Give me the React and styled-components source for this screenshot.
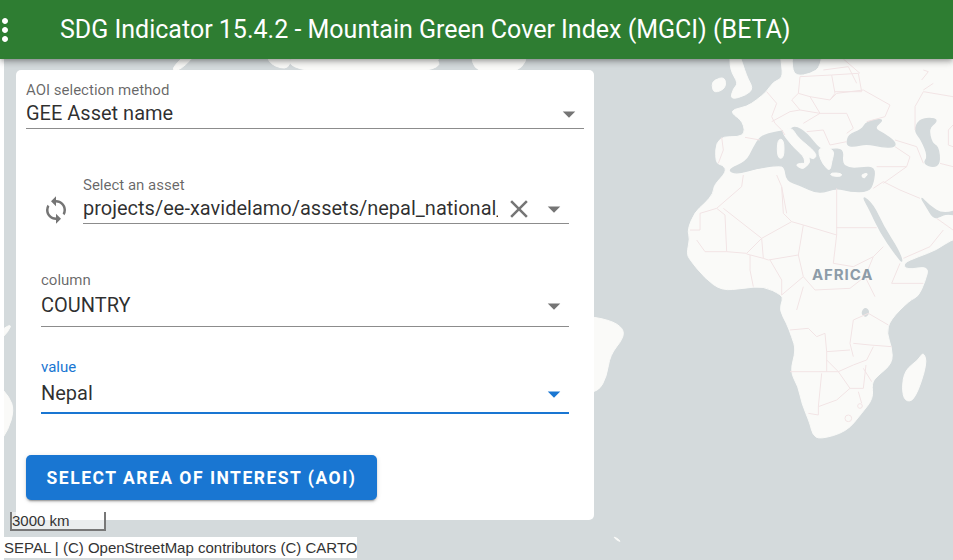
import styled, { createGlobalStyle } from "styled-components";
import { MdArrowDropDown, MdClose, MdMoreVert, MdSync } from "react-icons/md";

const GlobalStyle = createGlobalStyle`
  html, body {
    margin: 0;
    padding: 0;
    background: #fff;
  }
  body {
    font-family: Roboto, "Liberation Sans", sans-serif;
  }
`;

// coordinates below are in 3x units, same as tracing off a 3x crop of the map
const MAIN_LAND =
  "M700,-60 L1300,-60 L1300,500 L1089,565 L1040,600 L985,620 L938,640 L950,660 L1018,648 L1005,695 L985,740 L960,750 L900,810 L890,850 L905,890 L908,940 L860,980 L845,1000 L850,1045 L815,1090 L770,1145 L690,1168 L668,1155 L660,1120 L635,1060 L625,1010 L600,965 L618,900 L605,860 L590,820 L568,780 L578,750 L575,735 L520,708 L460,715 L395,722 L345,685 L300,630 L290,610 L300,565 L292,540 L315,485 L345,460 L370,430 L372,405 L410,365 L400,345 L375,340 L380,258 L465,262 L460,215 L425,190 L430,178 L470,170 L500,150 L530,125 L550,95 L578,85 L575,40 L565,-20 L610,-20 L605,55 L620,78 L660,72 L695,50 Z";

const WATER = [
  // med
  "M412,360 L470,335 L490,295 L512,258 L560,246 L600,240 L615,228 L650,250 L690,300 L715,300 L760,295 L755,340 L775,355 L810,355 L855,350 L850,400 L835,425 L780,425 L740,413 L685,432 L630,405 L590,392 L585,350 L565,345 L500,355 L440,372 Z",
  // black sea
  "M770,285 L775,255 L815,240 L830,215 L885,205 L850,235 L880,250 L915,275 L915,290 L880,292 L830,280 L790,290 Z",
  // caspian
  "M1000,205 L1035,205 L1040,215 L1015,235 L1025,280 L1045,290 L1050,340 L1030,352 L1000,340 L1015,320 L995,270 L975,245 L980,220 Z",
  // red sea
  "M815,435 L850,465 L880,530 L925,600 L940,642 L915,610 L870,545 L840,480 Z",
  // gulf
  "M990,438 L1015,465 L1060,495 L1130,470 L1130,500 L1070,490 L1050,500 L1030,505 L1010,470 Z",
  // lake victoria
  "M825,772 L838,785 L828,802 L814,790 Z",
];

const ISLANDS = [
  "M420,0 L445,0 L470,80 L490,115 L470,135 L420,150 L430,115 L445,100 L420,60 Z",
  "M372,90 L405,80 L408,115 L372,130 L365,105 Z",
  // madagascar
  "M1000,905 L1012,940 L975,1050 L945,1055 L935,1015 L945,960 L985,930 Z",
  // brazil
  "M-30,795 L60,810 L100,835 L100,865 L60,915 L50,980 L25,1025 L-30,1030 Z",
  // falklands
  "M70,1460 L82,1465 L93,1476 L80,1470 Z",
];

// drawn after the water, these sit inside the med
const MED_LAND = [
  // italy
  "M570,240 L606,232 L622,262 L682,310 L672,330 L654,318 L662,338 L638,358 L648,325 L610,292 Z",
  // greece
  "M688,292 L735,298 L725,335 L720,365 L698,342 L686,312 Z",
  // sardinia, corsica
  "M562,268 L582,268 L582,325 L562,325 Z",
  // sicily
  "M612,343 L650,338 L642,360 Z",
  // crete
  "M722,368 L756,370 L754,380 L722,378 Z",
  // cyprus
  "M812,374 L836,368 L822,388 Z",
];

const TOP_LAND = [
  "M-576,0 L-447,0 L-462,54 L-528,66 L-564,62 Z",
  "M-1260,60 L-1200,0 L-1170,0 L-1230,62 Z",
  "M-975,0 L-900,0 L-900,60 L-960,45 Z",
  "M-900,0 L-474,0 L-435,70 L-900,70 Z",
  "M-360,0 L-180,0 L-210,70 L-345,70 Z",
];

const LEFT_LAND = [
  "M-1780,850 L-1735,820 L-1745,845 L-1780,880 Z",
  "M-1780,1000 L-1742,1040 L-1728,1080 L-1745,1140 L-1780,1190 Z",
];

const BORDERS = [
  "M465,262 L510,270",
  "M395,262 L400,300 L385,340",
  "M530,125 L560,160 L545,200 L555,220 L575,240 L585,255",
  "M630,80 L625,130 L605,150 L630,180 L600,185 L545,215",
  "M630,80 L725,75 L735,130 L720,150 L660,140 L625,130",
  "M725,75 L805,70 L815,125 L735,125",
  "M720,150 L740,130 L820,120 L900,165 L885,200 L830,215",
  "M700,60 L775,50 L800,100",
  "M760,27 L810,70",
  "M690,190 L770,190 L790,235 L770,250",
  "M640,220 L690,190 L660,140",
  "M650,245 L700,240 L720,285 L770,275",
  "M630,180 L690,190",
  "M975,170 L1000,125 L1089,140",
  "M975,170 L975,240",
  "M915,270 L980,290 L1000,340",
  "M915,290 L960,320 L950,350 L860,350",
  "M880,400 L950,350",
  "M850,415 L880,395 L930,420 L990,445",
  "M1040,505 L1089,540",
  "M940,625 L1020,590 L1060,540",
  "M1050,340 L1089,350",
  "M1075,240 L1089,225",
  "M1075,240 L1075,285 L1089,290",
  "M300,540 L330,540 L330,490 L380,475 L455,410 L460,375",
  "M400,475 L515,565 L605,515 L580,490 L575,410 L560,375",
  "M380,475 L405,495 L410,605 L345,605 L320,570",
  "M410,605 L470,610 L515,565",
  "M515,565 L520,625 L470,612",
  "M605,515 L640,525 L625,615 L535,630",
  "M480,615 L480,660 L490,710",
  "M540,630 L575,690 L575,735",
  "M520,625 L535,630",
  "M575,735 L640,680 L625,615",
  "M575,410 L590,490",
  "M640,525 L740,555 L740,415",
  "M740,533 L860,533",
  "M740,555 L730,640 L790,650 L850,620 L880,590",
  "M850,620 L825,680 L855,740",
  "M930,640 L905,700 L1000,700",
  "M640,680 L675,720 L780,715 L825,680",
  "M640,710 L620,780",
  "M600,840 L655,835 L680,860 L705,850 L710,905 L780,900",
  "M600,965 L690,965 L745,965",
  "M710,905 L710,965",
  "M710,930 L745,965 L790,945 L830,930 L850,890",
  "M790,810 L835,790 L895,825",
  "M790,810 L780,880 L790,920",
  "M790,880 L840,885 L905,890",
  "M695,970 L685,1070 L740,1050 L780,1015 L745,965",
  "M685,1070 L685,1095 L655,1090",
  "M780,1015 L820,1015 L828,945",
  "M845,995 L820,955",
  "M805,1025 L815,1060",
  "M1000,120 L1030,100",
  "M1000,60 L1015,65 L995,90",
];

// rounds the corners of a traced outline so the coasts don't look cut with scissors
function smooth(d) {
  const nums = d.match(/-?\d+/g).map(Number);
  const pts = [];
  for (let i = 0; i < nums.length; i += 2) pts.push([nums[i], nums[i + 1]]);
  const mid = (a, b) => [(a[0] + b[0]) / 2, (a[1] + b[1]) / 2];
  const start = mid(pts[0], pts[1]);
  let out = `M${start[0]},${start[1]}`;
  for (let i = 1; i <= pts.length; i++) {
    const c = pts[i % pts.length];
    const m = mid(c, pts[(i + 1) % pts.length]);
    out += ` Q${c[0]},${c[1]} ${m[0]},${m[1]}`;
  }
  return out + " Z";
}

const MapLayer = styled.svg`
  position: absolute;
  left: 4px;
  top: 0;
  width: 949px;
  height: 560px;
  background: #d4dadc;
  filter: blur(0.4px);
`;

const Land = styled.path`
  fill: #fafaf8;
  stroke: #fafaf8;
  stroke-width: 3;
  stroke-linejoin: round;
`;

const Water = styled.path`
  fill: #d4dadc;
  stroke: #d4dadc;
  stroke-width: 4;
  stroke-linejoin: round;
`;

const Border = styled.path`
  fill: none;
  stroke: #f2e4e5;
  stroke-width: 3;
  stroke-linejoin: round;
`;

const Ring = styled.circle`
  fill: none;
  stroke: #f2e4e5;
  stroke-width: 3;
`;

const Page = styled.div`
  position: relative;
  width: 953px;
  height: 560px;
  overflow: hidden;
`;

const Header = styled.header`
  position: relative;
  z-index: 2;
  height: 59px;
  display: flex;
  align-items: center;
  background: #2e7d32;
  color: #fff;
  box-shadow: 0 2px 4px -1px rgba(0, 0, 0, 0.2), 0 4px 5px 0 rgba(0, 0, 0, 0.14),
    0 1px 10px 0 rgba(0, 0, 0, 0.12);
  svg {
    flex: none;
    font-size: 36px;
    margin-left: -13px;
  }
`;

const Title = styled.h1`
  margin: 0 0 0 37px;
  font-size: 25px;
  font-weight: 400;
  white-space: nowrap;
`;

const Panel = styled.main`
  position: relative;
  z-index: 1;
  box-sizing: border-box;
  width: 578px;
  height: 450px;
  margin: 11px 0 0 16px;
  padding: 11px 10px 0;
  background: #fff;
  border-radius: 5px;
`;

const Group = styled.div`
  margin: 0 15px;
`;

const Row = styled.div`
  display: flex;
  align-items: flex-end;
  margin-top: ${(p) => p.$top || 0}px;
`;

const Refresh = styled.div`
  flex: none;
  width: 42px;
  height: 47px;
  display: flex;
  align-items: flex-end;
  color: #757575;
  svg {
    font-size: 30px;
    margin-bottom: -1px;
  }
`;

const Field = styled.div`
  flex: 1;
  min-width: 0;
  box-sizing: border-box;
  height: ${(p) => (p.$tall ? 56 : 48)}px;
  margin-top: ${(p) => p.$top || 0}px;
  display: flex;
  flex-direction: column;
  justify-content: flex-start;
  border-bottom: ${(p) => (p.$active ? "2px solid #1976d2" : "1px solid #8c8c8c")};
`;

const Label = styled.label`
  display: block;
  height: 19px;
  line-height: 19px;
  font-size: 15px;
  color: ${(p) => (p.$active ? "#1976d2" : "rgba(0, 0, 0, 0.6)")};
`;

const Control = styled.div`
  display: flex;
  align-items: center;
  box-sizing: border-box;
  height: ${(p) => (p.$tall ? 36 : 28)}px;
  padding-bottom: ${(p) => (p.$active ? 1 : p.$tall ? 5 : 0)}px;
`;

const Value = styled.div`
  flex: 1;
  min-width: 0;
  margin-top: -2px;
  overflow: hidden;
  white-space: nowrap;
  font-size: 20px;
  line-height: 28px;
  color: rgba(0, 0, 0, 0.82);
`;

const Clear = styled.span`
  flex: none;
  display: flex;
  margin: 0 5px 0 6px;
  font-size: 30px;
  color: #757575;
`;

const Caret = styled.span`
  flex: none;
  display: flex;
  font-size: 30px;
  color: ${(p) => (p.$active ? "#1976d2" : "#757575")};
`;

const Submit = styled.button`
  display: block;
  box-sizing: border-box;
  width: 351px;
  height: 45px;
  margin-top: 41px;
  padding: 0;
  border: 0;
  border-radius: 5px;
  background: #1976d2;
  color: #fff;
  font-family: Roboto, sans-serif;
  font-size: 17.5px;
  font-weight: 700;
  letter-spacing: 1.5px;
  text-transform: uppercase;
  box-shadow: 0 3px 1px -2px rgba(0, 0, 0, 0.2), 0 2px 2px 0 rgba(0, 0, 0, 0.14),
    0 1px 5px 0 rgba(0, 0, 0, 0.12);
`;

const Scale = styled.div`
  position: absolute;
  z-index: 1;
  left: 10px;
  top: 512px;
  box-sizing: border-box;
  width: 96px;
  height: 19px;
  border: 2px solid #777;
  border-top: 0;
  background: rgba(255, 255, 255, 0.5);
  font-family: "Liberation Sans", Arial, sans-serif;
  font-size: 15px;
  line-height: 17px;
  color: #333;
`;

const Attribution = styled.div`
  position: absolute;
  z-index: 1;
  left: 4px;
  top: 537px;
  height: 21px;
  background: #fff;
  font-family: "Liberation Sans", Arial, sans-serif;
  font-size: 15px;
  line-height: 22px;
  white-space: nowrap;
  color: #333;
`;

const Continent = styled.div`
  position: absolute;
  left: 812px;
  top: 266px;
  font-family: Inter, "Liberation Sans", sans-serif;
  font-size: 15px;
  line-height: 18px;
  font-weight: 700;
  letter-spacing: 0.9px;
  color: #8d9ca8;
`;

function WorldMap() {
  return (
    <MapLayer viewBox="4 0 949 560">
      <g transform="translate(590 50) scale(0.33333)">
        <Land d={smooth(MAIN_LAND)} />
        {ISLANDS.concat(TOP_LAND, LEFT_LAND).map((d) => (
          <Land key={d} d={smooth(d)} />
        ))}
        {WATER.map((d) => (
          <Water key={d} d={smooth(d)} />
        ))}
        {MED_LAND.map((d) => (
          <Land key={d} d={smooth(d)} />
        ))}
        {BORDERS.map((d) => (
          <Border key={d} d={d} />
        ))}
        <Ring cx="775" cy="1105" r="10" />
        <Ring cx="810" cy="1068" r="7" />
      </g>
    </MapLayer>
  );
}

function Select({ label, value, active, tall, clearable, top }) {
  return (
    <Field $active={active} $tall={tall} $top={top}>
      <Label $active={active}>{label}</Label>
      <Control $active={active} $tall={tall}>
        <Value>{value}</Value>
        {clearable && (
          <Clear>
            <MdClose />
          </Clear>
        )}
        <Caret $active={active}>
          <MdArrowDropDown />
        </Caret>
      </Control>
    </Field>
  );
}

export default function App() {
  return (
    <Page>
      <GlobalStyle />
      <WorldMap />
      <Continent>AFRICA</Continent>
      <Header>
        <MdMoreVert />
        <Title>SDG Indicator 15.4.2 - Mountain Green Cover Index (MGCI) (BETA)</Title>
      </Header>
      <Panel>
        <Select label="AOI selection method" value="GEE Asset name" />
        <Group>
          <Row $top={47}>
            <Refresh>
              <MdSync />
            </Refresh>
            <Select
              label="Select an asset"
              value="projects/ee-xavidelamo/assets/nepal_national_boundary"
              clearable
            />
          </Row>
          <Select label="column" value="COUNTRY" tall top={47} />
          <Select label="value" value="Nepal" tall active top={31} />
        </Group>
        <Submit>Select area of interest (AOI)</Submit>
      </Panel>
      <Scale>3000 km</Scale>
      <Attribution>SEPAL | (C) OpenStreetMap contributors (C) CARTO</Attribution>
    </Page>
  );
}
